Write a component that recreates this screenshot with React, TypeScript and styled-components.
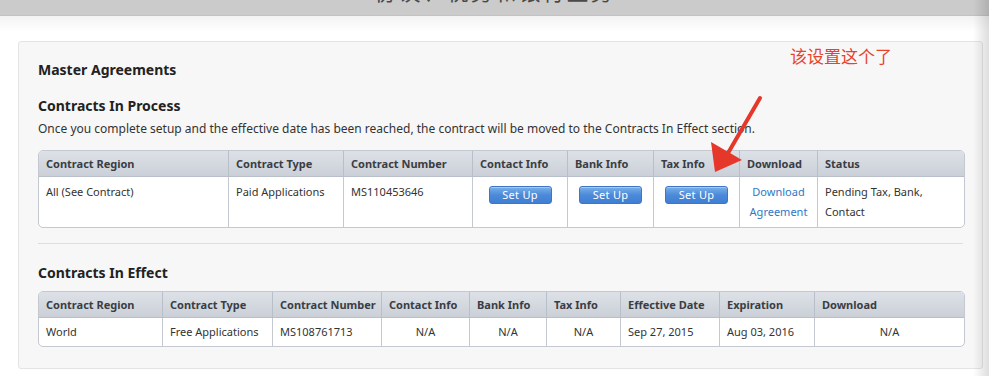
import React from "react";
import styled, { createGlobalStyle } from "styled-components";

const GlobalStyle = createGlobalStyle`
    html, body {
        margin: 0;
        padding: 0;
        background: #ffffff;
    }
    body {
        font-family: "Noto Sans", "DejaVu Sans", sans-serif;
        color: #333;
    }
`;

const Page = styled.div`
    position: relative;
    width: 989px;
    height: 376px;
    overflow: hidden;
    background: linear-gradient(#f2f2f2 15px, #ffffff 32px);
`;
const TopBar = styled.div`
    height: 15px;
    overflow: hidden;
    background: #cbcbcb;
    border-bottom: 1px solid #c2c2c2;
    text-align: center;
`;
const BarTitle = styled.div`
    margin-top: -23px;
    font-family: "Noto Sans CJK SC", "Noto Sans", sans-serif;
    font-size: 22px;
    line-height: 26px;
    color: #4a4a4a;
    letter-spacing: 2px;
`;
const Content = styled.div`
    padding: 25px 6px 0 18px;
`;
const Panel = styled.div`
    background: #f7f7f7;
    border: 1px solid #e4e4e4;
    border-radius: 3px;
    padding: 19px 19px 21px 19px;
`;
const Heading = styled.h2<{ $top?: number }>`
    margin: 0;
    font-size: 14px;
    line-height: 18px;
    font-weight: 700;
    color: #222;
    margin-top: ${(p) => p.$top ?? 0}px;
`;
const Description = styled.p`
    margin: 6px 0 0;
    font-size: 12px;
    line-height: 16px;
    color: #333;
`;
const Table = styled.table<{ $top: number }>`
    width: 100%;
    margin-top: ${(p) => p.$top}px;
    border-collapse: separate;
    border-spacing: 0;
    border: 1px solid #c3c8d1;
    border-radius: 5px;
    overflow: hidden;
    table-layout: fixed;
    background: #fff;
    font-size: 11px;
`;
const Th = styled.th`
    height: 25px;
    padding: 0 7px;
    text-align: left;
    font-weight: 700;
    color: #3a3d44;
    background: linear-gradient(#dde1e7, #cbd0d8);
    border-bottom: 1px solid #b9bfc9;
    border-left: 1px solid #b9bfc9;
    white-space: nowrap;
    &:first-child {
        border-left: none;
    }
`;
const Td = styled.td<{ $center?: boolean; $tall?: boolean }>`
    height: ${(p) => (p.$tall ? 40 : 20)}px;
    padding: ${(p) => (p.$tall ? "5px 7px" : "4px 7px")};
    vertical-align: ${(p) => (p.$tall ? "top" : "middle")};
    text-align: ${(p) => (p.$center ? "center" : "left")};
    line-height: 20px;
    color: #333;
    border-left: 1px solid #c3c8d1;
    &:first-child {
        border-left: none;
    }
`;
const SetUpButton = styled.button`
    display: block;
    margin: 4px auto 0;
    width: 63px;
    height: 18px;
    padding: 0;
    border: 1px solid #3e76c4;
    border-radius: 3px;
    background: linear-gradient(#7ab0ea, #4c8ad9 50%, #3f7ed2);
    color: #fff;
    font-family: "Noto Sans", "DejaVu Sans", sans-serif;
    font-size: 11px;
    line-height: 16px;
    letter-spacing: 0.3px;
    box-shadow: inset 0 1px 0 rgba(255, 255, 255, 0.35);
`;
const DownloadLink = styled.a`
    color: #2f78c4;
    text-decoration: none;
`;
const Divider = styled.hr`
    margin: 15px 0 0;
    border: none;
    border-top: 1px solid #dedede;
`;
const Annotation = styled.div`
    position: absolute;
    left: 790px;
    top: 44px;
    font-family: "Noto Sans CJK SC", sans-serif;
    font-size: 17px;
    line-height: 24px;
    color: #e8412c;
`;
const ArrowLayer = styled.svg`
    position: absolute;
    left: 0;
    top: 0;
    pointer-events: none;
`;
const EdgeShade = styled.div`
    position: absolute;
    right: 0;
    top: 0;
    width: 16px;
    height: 100%;
    background: linear-gradient(90deg, rgba(0, 0, 0, 0), rgba(0, 0, 0, 0.08) 60%, rgba(0, 0, 0, 0.13));
`;

const processCols = [189, 115, 129, 95, 86, 86, 78, 147];
const effectCols = [123, 110, 109, 88, 77, 74, 99, 95, 150];

const effectHeaders = [
    "Contract Region",
    "Contract Type",
    "Contract Number",
    "Contact Info",
    "Bank Info",
    "Tax Info",
    "Effective Date",
    "Expiration",
    "Download",
];

function App() {
    return (
        <Page>
            <GlobalStyle />
            <TopBar>
                <BarTitle>协议、税务和银行业务</BarTitle>
            </TopBar>
            <Content>
                <Panel>
                    <Heading>Master Agreements</Heading>
                    <Heading $top={18}>Contracts In Process</Heading>
                    <Description>
                        Once you complete setup and the effective date has been reached, the contract will be moved to the Contracts In Effect section.
                    </Description>
                    <Table $top={13}>
                        <colgroup>
                            {processCols.map((w, i) => (
                                <col key={i} style={{ width: w }} />
                            ))}
                        </colgroup>
                        <thead>
                            <tr>
                                <Th>Contract Region</Th>
                                <Th>Contract Type</Th>
                                <Th>Contract Number</Th>
                                <Th>Contact Info</Th>
                                <Th>Bank Info</Th>
                                <Th>Tax Info</Th>
                                <Th>Download</Th>
                                <Th>Status</Th>
                            </tr>
                        </thead>
                        <tbody>
                            <tr>
                                <Td $tall>All (See Contract)</Td>
                                <Td $tall>Paid Applications</Td>
                                <Td $tall>MS110453646</Td>
                                <Td $tall $center>
                                    <SetUpButton>Set Up</SetUpButton>
                                </Td>
                                <Td $tall $center>
                                    <SetUpButton>Set Up</SetUpButton>
                                </Td>
                                <Td $tall $center>
                                    <SetUpButton>Set Up</SetUpButton>
                                </Td>
                                <Td $tall $center>
                                    <DownloadLink href="#">Download Agreement</DownloadLink>
                                </Td>
                                <Td $tall>Pending Tax, Bank, Contact</Td>
                            </tr>
                        </tbody>
                    </Table>
                    <Divider />
                    <Heading $top={20}>Contracts In Effect</Heading>
                    <Table $top={9}>
                        <colgroup>
                            {effectCols.map((w, i) => (
                                <col key={i} style={{ width: w }} />
                            ))}
                        </colgroup>
                        <thead>
                            <tr>
                                {effectHeaders.map((h) => (
                                    <Th key={h}>{h}</Th>
                                ))}
                            </tr>
                        </thead>
                        <tbody>
                            <tr>
                                <Td>World</Td>
                                <Td>Free Applications</Td>
                                <Td>MS108761713</Td>
                                <Td $center>N/A</Td>
                                <Td $center>N/A</Td>
                                <Td $center>N/A</Td>
                                <Td>Sep 27, 2015</Td>
                                <Td>Aug 03, 2016</Td>
                                <Td $center>N/A</Td>
                            </tr>
                        </tbody>
                    </Table>
                </Panel>
            </Content>
            <Annotation>该设置这个了</Annotation>
            <ArrowLayer width="989" height="376" viewBox="0 0 989 376">
                <line x1="760" y1="98" x2="724" y2="160" stroke="#e5382a" strokeWidth="4" strokeLinecap="round" />
                <polygon points="715,172 711,142 742,160" fill="#e5382a" />
            </ArrowLayer>
            <EdgeShade />
        </Page>
    );
}
export default App;
